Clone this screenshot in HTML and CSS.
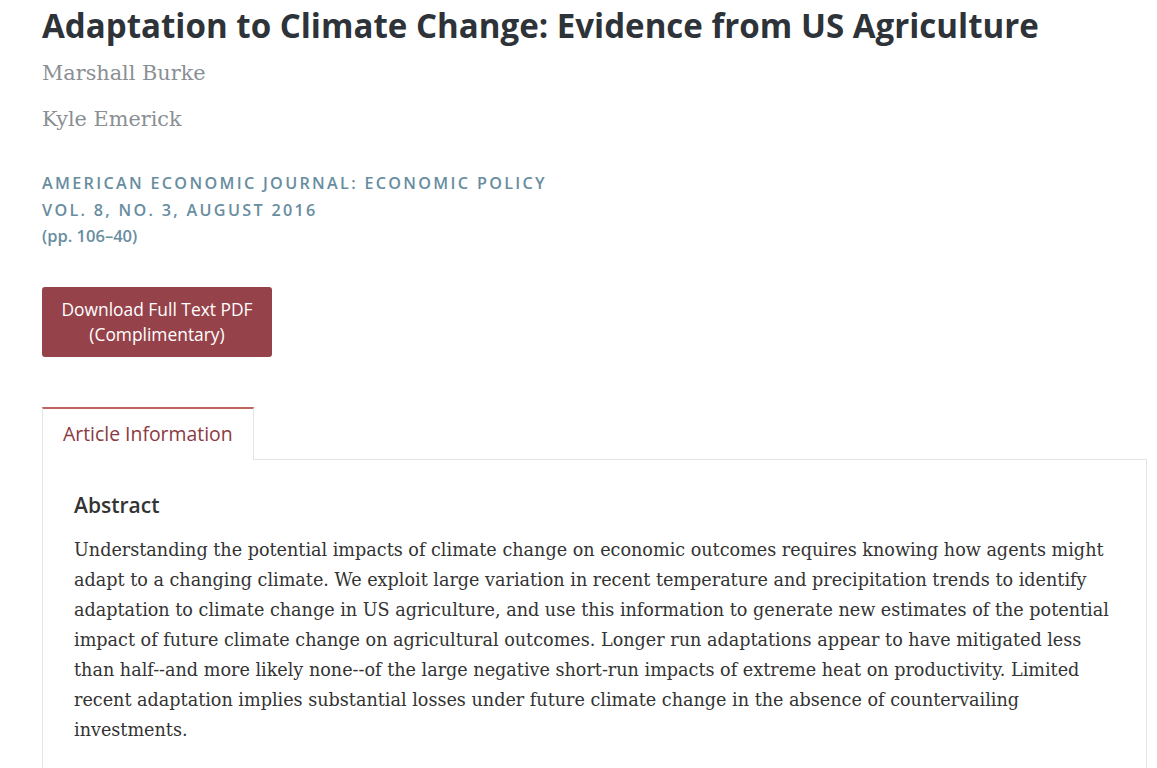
FILE: index.html
```html
<!DOCTYPE html>
<html lang="en">
<head>
<meta charset="utf-8">
<title>Adaptation to Climate Change: Evidence from US Agriculture</title>
<link rel="stylesheet" href="styles.css">
</head>
<body>
<main class="article">
  <h1 class="title">Adaptation to Climate Change: Evidence from US Agriculture</h1>
  <ul class="authors">
    <li>Marshall Burke</li>
    <li>Kyle Emerick</li>
  </ul>
  <div class="journal">
    <div class="journal-name">American Economic Journal: Economic Policy</div>
    <div class="journal-issue">Vol. 8, No. 3, August 2016</div>
    <div class="pages">(pp. 106&ndash;40)</div>
  </div>
  <a class="download" href="#">Download Full Text PDF<br>(Complimentary)</a>
  <div class="tabs">
    <div class="tab active">Article Information</div>
    <div class="tab-fill"></div>
  </div>
  <section class="panel">
    <h2 class="abstract-title">Abstract</h2>
    <p class="abstract">Understanding the potential impacts of climate change on economic outcomes requires knowing how agents might adapt to a changing climate. We exploit large variation in recent temperature and precipitation trends to identify adaptation to climate change in US agriculture, and use this information to generate new estimates of the potential impact of future climate change on agricultural outcomes. Longer run adaptations appear to have mitigated less than half--and more likely none--of the large negative short-run impacts of extreme heat on productivity. Limited recent adaptation implies substantial losses under future climate change in the absence of countervailing investments.</p>
  </section>
</main>
</body>
</html>
```
FILE: styles.css
```css
* { box-sizing: border-box; }
html, body { margin: 0; padding: 0; background: #fff; }
body { font-family: "Open Sans", "Noto Sans", sans-serif; color: #333; }
.article { padding: 0 10px 0 42px; }
.title {
  margin: 0;
  padding-top: 6px;
  font-family: "Open Sans", sans-serif;
  font-weight: 700;
  font-size: 33.1px;
  line-height: 40px;
  color: #2d3338;
}
.authors { list-style: none; margin: 4px 0 0; padding: 0; }
.authors li {
  font-family: "DejaVu Serif", serif;
  font-size: 20.8px;
  line-height: 46px;
  color: #8a8f94;
}
.journal { margin-top: 28px; }
.journal-name, .journal-issue {
  font-family: "Open Sans", sans-serif;
  font-weight: 600;
  font-size: 16.2px;
  line-height: 27px;
  letter-spacing: 2.3px;
  text-transform: uppercase;
  color: #688da0;
}
.pages {
  font-family: "Open Sans", sans-serif;
  font-weight: 600;
  font-size: 16.5px;
  line-height: 24px;
  color: #688da0;
}
.download {
  display: inline-block;
  margin-top: 39px;
  width: 230px;
  height: 70px;
  padding-top: 10px;
  background: #96424a;
  border-radius: 3px;
  color: #fff;
  text-align: center;
  text-decoration: none;
  font-size: 17.4px;
  line-height: 25px;
}
.tabs { display: flex; margin-top: 50px; }
.tab {
  width: 212px;
  height: 53px;
  border: 1px solid #e4e4e4;
  border-top: 2px solid #c0645e;
  border-bottom: none;
  color: #8b3a42;
  font-size: 19.4px;
  line-height: 50px;
  padding-left: 20px;
}
.tab-fill { flex: 1; border-bottom: 1px solid #e4e4e4; }
.panel {
  border: 1px solid #e4e4e4;
  border-top: none;
  padding: 31px 31px 60px;
}
.abstract-title {
  margin: 0;
  font-family: "Open Sans", sans-serif;
  font-weight: 600;
  font-size: 21px;
  line-height: 28px;
  color: #333;
}
.abstract {
  margin: 16px 0 0;
  font-family: "DejaVu Serif", serif;
  font-size: 17.6px;
  line-height: 30px;
  color: #333;
}
```
